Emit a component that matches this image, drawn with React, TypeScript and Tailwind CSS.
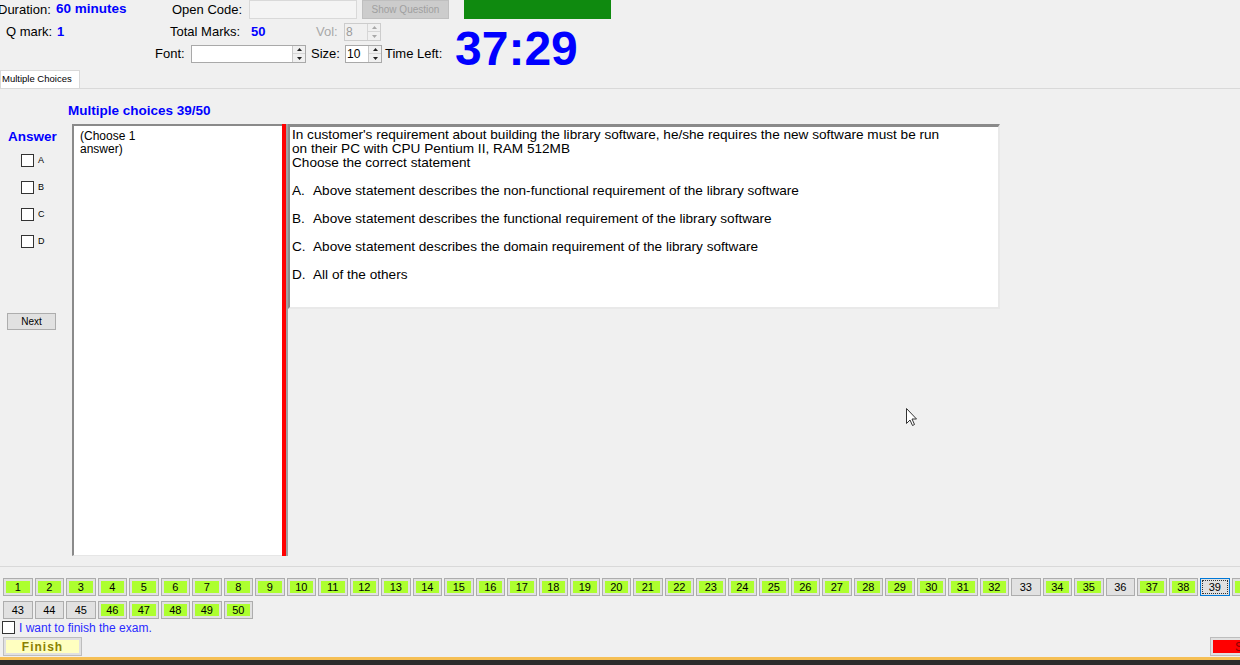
import React from "react";

const font = { fontFamily: '"Liberation Sans", Arial, sans-serif' };

function Spinner({ value, width, disabled }: { value: string; width: string; disabled?: boolean }) {
  return (
    <div
      className={`flex h-[18px] ${width} items-stretch border ${
        disabled ? "border-[#cccccc] bg-[#f0f0f0] text-[#9a9a9a]" : "border-[#a9a9a9] bg-white text-black"
      }`}
    >
      <div className="flex-1 pl-[1px] text-[12px] leading-[16px]">{value}</div>
      <div className={`flex w-[13px] flex-col border-l ${disabled ? "border-[#d6d6d6]" : "border-[#c8c8c8]"} bg-[#f0f0f0]`}>
        <div className="flex h-[8px] items-center justify-center border-b border-[#d6d6d6]">
          <svg width="5" height="3" viewBox="0 0 5 3">
            <path d="M2.5 0 L5 3 L0 3 Z" fill={disabled ? "#a8a8a8" : "#222"} />
          </svg>
        </div>
        <div className="flex flex-1 items-center justify-center">
          <svg width="5" height="3" viewBox="0 0 5 3">
            <path d="M0 0 L5 0 L2.5 3 Z" fill={disabled ? "#a8a8a8" : "#222"} />
          </svg>
        </div>
      </div>
    </div>
  );
}

function NumBtn({ n, state }: { n: number; state: "green" | "gray" | "focus" }) {
  if (state === "focus") {
    return (
      <div className="h-[18px] w-[29.5px] shrink-0 border border-[#0078d7] bg-[#e1e1e1] p-[1px]">
        <div className="flex h-full w-full items-center justify-center border border-dotted border-[#333] text-[11px] leading-none text-black">
          {n}
        </div>
      </div>
    );
  }
  return (
    <div className="h-[18px] w-[29.5px] shrink-0 border border-[#adadad] bg-[#e1e1e1] p-[2px]">
      <div
        className={`flex h-full w-full items-center justify-center text-[11px] leading-none text-black ${
          state === "green" ? "bg-[#adff2f]" : "bg-[#e1e1e1]"
        }`}
      >
        {n}
      </div>
    </div>
  );
}

const row1Gray = new Set([33, 36]);
const row2Gray = new Set([43, 44, 45]);

export default function App() {
  const row1 = Array.from({ length: 42 }, (_, i) => i + 1);
  const row2 = Array.from({ length: 8 }, (_, i) => i + 43);
  const options = [
    ["A.", "Above statement describes the non-functional requirement of the library software"],
    ["B.", "Above statement describes the functional requirement of the library software"],
    ["C.", "Above statement describes the domain requirement of the library software"],
    ["D.", "All of the others"],
  ];
  return (
    <div className="relative flex h-[665px] w-[1240px] flex-col overflow-hidden bg-[#f0f0f0] text-black" style={font}>
      {/* Header */}
      <div className="h-[70px] shrink-0">
        <div className="flex h-[19px] items-center text-[13px]">
          <span className="ml-[-2px] w-[58px] shrink-0">Duration:</span>
          <span className="w-[116px] shrink-0 text-[13.5px] font-bold text-[#0000ff]">60 minutes</span>
          <span className="w-[77px] shrink-0">Open Code:</span>
          <div className="h-[19px] w-[108px] shrink-0 border border-[#d9d9d9] bg-[#f4f4f4]" />
          <div className="ml-[5px] flex h-[19px] w-[87px] shrink-0 items-center justify-center border border-[#bfbfbf] bg-[#cccccc] text-[10px] text-[#a0a0a0]">
            Show Question
          </div>
          <div className="ml-[15px] h-[19px] w-[147px] shrink-0 bg-[#0f8a0f]" />
        </div>
        <div className="flex">
          <div className="flex w-[455px] shrink-0 flex-col text-[13px]">
            <div className="mt-[4px] flex h-[18px] items-center">
              <span className="ml-[6px] w-[51px] shrink-0">Q mark:</span>
              <span className="w-[113px] shrink-0 font-bold text-[#0000ff]">1</span>
              <span className="w-[81px] shrink-0">Total Marks:</span>
              <span className="w-[65px] shrink-0 font-bold text-[#0000ff]">50</span>
              <span className="w-[28px] shrink-0 text-[#a8a8a8]">Vol:</span>
              <Spinner value="8" width="w-[37px]" disabled />
            </div>
            <div className="mt-[4px] flex h-[18px] items-center">
              <span className="ml-[155px] w-[36px] shrink-0">Font:</span>
              <Spinner value="" width="w-[115px]" />
              <span className="ml-[5px] w-[34px] shrink-0">Size:</span>
              <Spinner value="10" width="w-[37px]" />
              <span className="ml-[3px] shrink-0">Time Left:</span>
            </div>
          </div>
          <div className="mt-[6px] text-[48px] font-bold leading-none text-[#0000ff]">37:29</div>
        </div>
      </div>

      {/* Tab strip */}
      <div className="flex h-[19px] shrink-0 border-b border-[#d9d9d9]">
        <div className="flex w-[80px] items-center border-x border-t border-[#d9d9d9] bg-white pl-[1px] text-[9.5px]">
          Multiple Choices
        </div>
      </div>

      {/* Tab page */}
      <div className="flex h-[478px] shrink-0 flex-col border-b border-[#d9d9d9]">
        <div className="pl-[68px] pt-[14px] text-[13.5px] font-bold leading-[15px] text-[#0000ff]">Multiple choices 39/50</div>
        <div className="mt-[6px] flex">
          <div className="flex w-[72px] shrink-0 flex-col">
            <div className="pl-[8px] pt-[5px] text-[13.5px] font-bold leading-[15px] text-[#0000ff]">Answer</div>
            <div className="mt-[10px] flex flex-col gap-[14px] pl-[21px]">
              {["A", "B", "C", "D"].map((l) => (
                <div key={l} className="flex h-[13px] items-center">
                  <div className="h-[13px] w-[13px] border border-[#333] bg-white" />
                  <span className="ml-[4px] text-[9px]">{l}</span>
                </div>
              ))}
            </div>
            <div className="ml-[7px] mt-[65px] flex h-[17px] w-[49px] items-center justify-center border border-[#adadad] bg-[#e1e1e1] text-[10px]">
              Next
            </div>
          </div>
          <div className="h-[432px] w-[210px] shrink-0 border-b border-l-2 border-t-2 border-b-[#e6e6e6] border-l-[#8a8a8a] border-t-[#8a8a8a] bg-white pl-[6px] pt-[4px] text-[12px] leading-[13px]">
            (Choose 1
            <br />
            answer)
          </div>
          <div className="h-[432px] w-[4px] shrink-0 bg-[#ff0000]" />
          <div className="h-[432px] w-[2px] shrink-0 bg-[#a0a0a0]" />
          <div className="h-[185px] w-[712px] shrink-0 border-b-2 border-l-2 border-r-2 border-t-[3px] border-b-[#e9e9e9] border-l-[#8a8a8a] border-r-[#e9e9e9] border-t-[#8a8a8a] bg-white pl-[2px] pt-[1px] text-[13.6px] leading-[14px]">
            <div>In customer&apos;s requirement about building the library software, he/she requires the new software must be run</div>
            <div>on their PC with CPU Pentium II, RAM 512MB</div>
            <div>Choose the correct statement</div>
            {options.map(([k, t]) => (
              <div key={k} className="mt-[14px] flex">
                <span className="w-[21px] shrink-0">{k}</span>
                <span>{t}</span>
              </div>
            ))}
          </div>
        </div>
      </div>

      {/* Bottom */}
      <div className="mt-[11px] flex flex-col gap-[5px] pl-[3px]">
        <div className="flex gap-[2px] overflow-hidden">
          {row1.map((n) => (
            <NumBtn key={n} n={n} state={n === 39 ? "focus" : row1Gray.has(n) ? "gray" : "green"} />
          ))}
        </div>
        <div className="flex gap-[2px]">
          {row2.map((n) => (
            <NumBtn key={n} n={n} state={row2Gray.has(n) ? "gray" : "green"} />
          ))}
        </div>
      </div>
      <div className="mt-[2px] flex h-[13px] items-center pl-[2px]">
        <div className="h-[13px] w-[13px] border border-[#333] bg-white" />
        <span className="ml-[4px] text-[12px] text-[#2a2aff]">I want to finish the exam.</span>
      </div>
      <div className="mt-[3px] flex h-[19px] justify-between">
        <div className="ml-[3px] w-[79px] border border-[#bdbdbd] bg-[#e1e1e1] p-[2px]">
          <div className="flex h-full items-center justify-center bg-[#ffffc0] text-[12px] font-bold tracking-[1px] text-[#8a8000]">
            Finish
          </div>
        </div>
        <div className="mr-[-12px] w-[42px] shrink-0 border border-[#bdbdbd] bg-[#e1e1e1] p-[2px]">
          <div className="flex h-full items-center bg-[#ff0000] pl-[22px] text-[12px] text-[#8b0000]">S</div>
        </div>
      </div>
      <div className="mt-[1px] h-[3px] shrink-0 bg-[#f5bf55]" />
      <div className="flex-1 bg-[#2b2b2b]" />

      {/* mouse cursor */}
      <svg className="absolute left-[906px] top-[408px]" width="12" height="19" viewBox="0 0 12 19">
        <path d="M0.5 0.5 L0.5 15.5 L4 12 L6.5 17.5 L8.5 16.5 L6 11 L10.5 11 Z" fill="#fff" stroke="#333" strokeWidth="1" />
      </svg>
    </div>
  );
}
